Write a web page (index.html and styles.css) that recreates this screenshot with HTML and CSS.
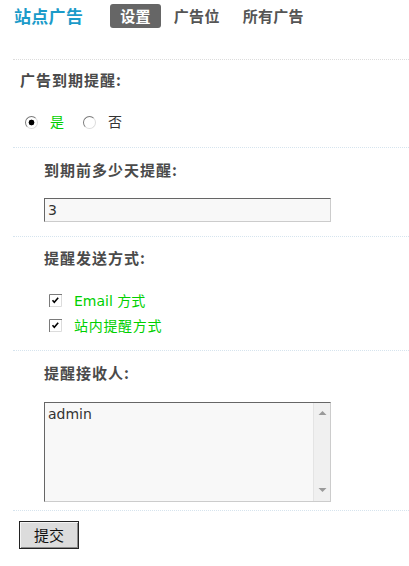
FILE: index.html
```html
<!DOCTYPE html>
<html lang="zh-CN">
<head>
<meta charset="utf-8">
<title>站点广告</title>
<link rel="stylesheet" href="styles.css">
</head>
<body>
<div class="page">
  <div class="header">
    <h1 class="title">站点广告</h1>
    <nav class="tabs">
      <a class="tab active">设置</a>
      <a class="tab">广告位</a>
      <a class="tab">所有广告</a>
    </nav>
  </div>

  <div class="section first">
    <div class="label">广告到期提醒:</div>
    <div class="radios">
      <span class="radio checked"></span><span class="opt green">是</span>
      <span class="radio"></span><span class="opt">否</span>
    </div>
  </div>

  <div class="section s-days">
    <div class="label">到期前多少天提醒:</div>
    <div class="field">3</div>
  </div>

  <div class="section s-method">
    <div class="label">提醒发送方式:</div>
    <div class="checks">
      <div class="check-row">
        <svg class="cbox" width="13" height="13" viewBox="0 0 13 13"><rect x="0" y="0" width="13" height="13" fill="#fff"/><path d="M0.5 13V0.5H13" fill="none" stroke="#7a7a7a"/><path d="M1 12.5H12.5V1" fill="none" stroke="#dcdcdc"/><path d="M3.5 6.2L5.3 8.2L9.2 3.8" fill="none" stroke="#000" stroke-width="1.6"/></svg>
        <span class="opt green">Email 方式</span>
      </div>
      <div class="check-row">
        <svg class="cbox" width="13" height="13" viewBox="0 0 13 13"><rect x="0" y="0" width="13" height="13" fill="#fff"/><path d="M0.5 13V0.5H13" fill="none" stroke="#7a7a7a"/><path d="M1 12.5H12.5V1" fill="none" stroke="#dcdcdc"/><path d="M3.5 6.2L5.3 8.2L9.2 3.8" fill="none" stroke="#000" stroke-width="1.6"/></svg>
        <span class="opt green cjk">站内提醒方式</span>
      </div>
    </div>
  </div>

  <div class="section s-recv">
    <div class="label">提醒接收人:</div>
    <div class="textbox">
      <div class="textbox-text">admin</div>
      <div class="scrollbar">
        <svg width="9" height="6" viewBox="0 0 9 6"><path d="M0.5 5L4.5 1L8.5 5Z" fill="#9a9a9a"/></svg>
        <svg width="9" height="6" viewBox="0 0 9 6"><path d="M0.5 1L4.5 5L8.5 1Z" fill="#9a9a9a"/></svg>
      </div>
    </div>
  </div>

  <div class="actions">
    <button class="submit" type="button">提交</button>
  </div>
</div>
</body>
</html>
```

FILE: styles.css
```css
html, body {
  margin: 0;
  padding: 0;
  background: #fff;
}
body {
  font-family: "DejaVu Sans", "Noto Sans CJK SC", sans-serif;
  font-size: 14px;
  color: #333;
}
.page {
  margin-left: 13px;
}
.header {
  display: flex;
  align-items: center;
  height: 24px;
  padding: 4px 0 31px 1px;
  border-bottom: 1px dotted #dcdcdc;
}
.title {
  margin: 0;
  font-family: "Noto Sans CJK SC", sans-serif;
  font-size: 17px;
  font-weight: 700;
  line-height: 24px;
  color: #1b9bc9;
  letter-spacing: 0.3px;
}
.tabs {
  display: flex;
  gap: 3px;
  margin-left: 27px;
}
.tab {
  display: block;
  height: 24px;
  line-height: 24px;
  padding: 0 10px;
  border-radius: 3px;
  font-family: "Noto Sans CJK SC", sans-serif;
  font-size: 15px;
  font-weight: 700;
  color: #555;
  letter-spacing: 0.3px;
}
.tab.active {
  background: #666;
  color: #fff;
}
.section {
  padding: 12px 0 14px 31px;
  border-bottom: 1px dotted #d6e4ee;
}
.section.first {
  padding: 10px 0 15px 7px;
}
.section.s-method {
  padding-top: 11px;
  padding-bottom: 12px;
}
.section.s-recv {
  padding-bottom: 8px;
}
.label {
  font-family: "Noto Sans CJK SC", sans-serif;
  font-size: 15px;
  font-weight: 700;
  line-height: 20px;
  color: #4a4a4a;
  letter-spacing: 1px;
}
.radios {
  display: flex;
  align-items: center;
  height: 20px;
  margin-top: 22px;
}
.radio {
  box-sizing: border-box;
  width: 13px;
  height: 13px;
  border-radius: 50%;
  border: 1px solid;
  border-color: #7a7a7a #dcdcdc #dcdcdc #7a7a7a;
  background: #fff;
  margin-left: 5px;
  margin-right: 12px;
}
.radio + .opt + .radio {
  margin-left: 19px;
}
.radio.checked {
  background: radial-gradient(circle at 50% 50%, #000 0, #000 2.6px, #fff 3.2px);
}
.opt {
  font-family: "DejaVu Sans", "Noto Sans CJK SC", sans-serif;
  font-size: 14px;
  line-height: 20px;
  color: #333;
}
.opt.cjk {
  letter-spacing: 0.7px;
}
.green {
  color: #00d000;
}
.field {
  box-sizing: border-box;
  width: 287px;
  height: 24px;
  margin-top: 18px;
  padding-left: 3px;
  border: 1px solid;
  border-color: #666 #ccc #ccc #666;
  background: #f8f8f8;
  font-size: 14px;
  line-height: 22px;
  color: #333;
}
.checks {
  margin-top: 20px;
}
.check-row {
  display: flex;
  align-items: center;
  height: 25px;
}
.cbox {
  display: block;
  margin-left: 5px;
  margin-right: 12px;
}
.textbox {
  box-sizing: border-box;
  display: flex;
  width: 287px;
  height: 100px;
  margin-top: 19px;
  border: 1px solid;
  border-color: #666 #ccc #ccc #666;
  background: #f8f8f8;
}
.textbox-text {
  flex: 1;
  padding: 2px 3px;
  font-size: 14px;
  line-height: 18px;
  color: #333;
}
.scrollbar {
  width: 16px;
  display: flex;
  flex-direction: column;
  justify-content: space-between;
  align-items: center;
  padding: 7px 0 8px;
  background: #f0f0f0;
  border-left: 1px solid #e4e4e4;
}
.scrollbar svg {
  display: block;
}
.actions {
  padding: 10px 0 0 6px;
}
.submit {
  box-sizing: border-box;
  width: 60px;
  height: 28px;
  padding: 0;
  border: 1px solid #222;
  background: #dcdcdc;
  box-shadow: inset 1px 1px 0 #f4f4f4, inset -1px -1px 0 #8a8a8a;
  font-family: "Noto Sans CJK SC", sans-serif;
  font-size: 15px;
  color: #111;
  line-height: 24px;
}
```
